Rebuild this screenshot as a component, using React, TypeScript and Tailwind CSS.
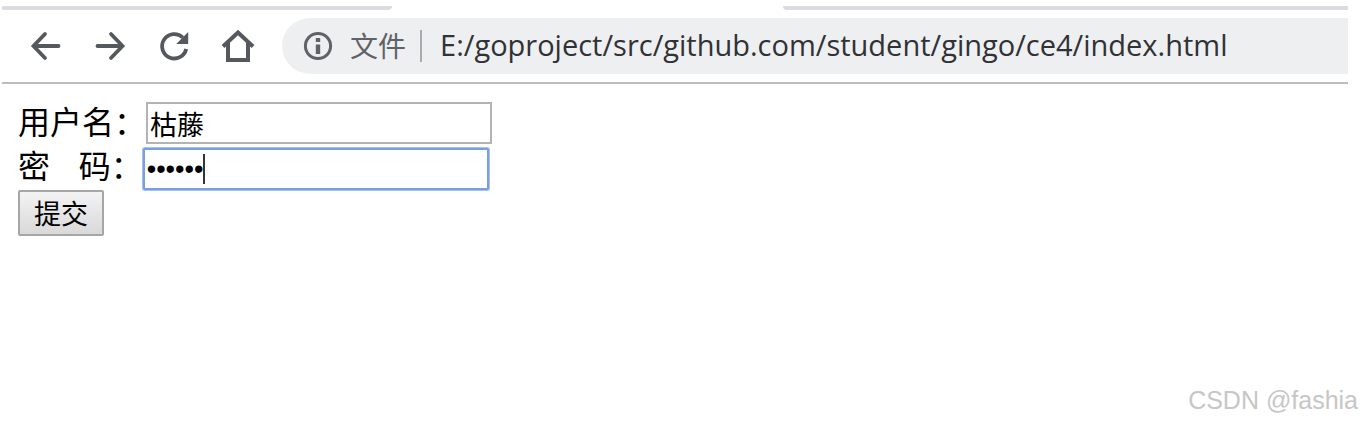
import React, { useState } from 'react';

function BackIcon() {
    return (
        <svg className="size-8" viewBox="0 0 32 32" fill="none" stroke="currentColor" strokeWidth="3.8" strokeLinecap="round">
            <path d="M28.500 16H4M15 4L3.500 16L15 28" />
        </svg>
    );
}

function ForwardIcon() {
    return (
        <svg className="size-8" viewBox="0 0 32 32" fill="none" stroke="currentColor" strokeWidth="3.8" strokeLinecap="round">
            <path d="M3.500 16H28M17 4L28.500 16L17 28" />
        </svg>
    );
}

function ReloadIcon() {
    return (
        <svg className="size-8" viewBox="0 0 32 32" fill="none" stroke="currentColor" strokeWidth="3.8">
            <path d="M28.200 19A12.200 12.200 0 1 1 24.800 7.500" />
            <path d="M30.200 2V14H18.200Z" fill="currentColor" stroke="none" />
        </svg>
    );
}

function HomeIcon() {
    return (
        <svg className="size-9" viewBox="0 0 36 36" fill="none" stroke="currentColor" strokeWidth="4">
            <path d="M3 18.500L18 4.500L33 18.500" />
            <path d="M8 15V32H28V15" />
        </svg>
    );
}

function InfoIcon() {
    return (
        <svg className="size-8 shrink-0" viewBox="0 0 32 32" fill="none" stroke="currentColor">
            <circle cx="16" cy="16" r="12.600" strokeWidth="3" />
            <path d="M16 14.500V24" strokeWidth="4.4" />
            <path d="M16 8V12" strokeWidth="4.4" />
        </svg>
    );
}

const navButtons = [
    { label: '后退', Icon: BackIcon },
    { label: '前进', Icon: ForwardIcon },
    { label: '重新加载', Icon: ReloadIcon },
    { label: '主页', Icon: HomeIcon },
];

function BrowserBar() {
    const [url, setUrl] = useState('E:/goproject/src/github.com/student/gingo/ce4/index.html');

    return (
        <header>
            <div className="flex h-1 justify-between">
                <div className="w-[29%] rounded-br-lg bg-[#dadce1]" />
                <div className="w-[42%] rounded-bl-lg bg-[#dadce1]" />
            </div>
            <div className="flex items-center border-b-2 border-[#bcbcbc] py-2 pl-3">
                <nav className="flex pr-3 text-[#55585d]">
                    {navButtons.map(({ label, Icon }) => (
                        <button key={label} type="button" aria-label={label} className="flex h-14 w-16 items-center justify-center">
                            <Icon />
                        </button>
                    ))}
                </nav>
                <div className="flex h-14 flex-1 items-center rounded-l-full bg-[#eeeff1] pl-5 text-[28px] text-[#5f6368]">
                    <InfoIcon />
                    <label htmlFor="url" className="ml-4 shrink-0 pb-0.5">文件</label>
                    <div className="mr-4 ml-3.5 h-8 w-0.5 shrink-0 bg-[#a9abae]" />
                    <input
                        id="url"
                        type="text"
                        value={url}
                        onChange={(e) => setUrl(e.target.value)}
                        className="min-w-0 flex-1 bg-transparent pb-0.5 pl-0.5 font-['Open_Sans','Noto_Sans_CJK_SC',sans-serif] text-[29px] text-[#303236] outline-none"
                    />
                </div>
            </div>
        </header>
    );
}

function LoginForm() {
    const [username, setUsername] = useState('枯藤');
    const [password, setPassword] = useState('123456');

    return (
        <form className="px-4 pt-[18px] text-[32px] text-black" onSubmit={(e) => e.preventDefault()}>
            <div className="flex h-11 items-start">
                <label htmlFor="username" className="leading-9">用户名：</label>
                <input
                    id="username"
                    type="text"
                    value={username}
                    onChange={(e) => setUsername(e.target.value)}
                    className="h-[42px] w-[346px] border-2 border-[#b3b3b3] bg-white px-0.5 text-[27px] outline-none"
                />
            </div>
            <div className="flex h-11 items-end">
                <label htmlFor="password" className="self-start leading-9">密&nbsp;&nbsp;&nbsp;&nbsp;码：</label>
                <div className="relative">
                    <input
                        id="password"
                        type="password"
                        value={password}
                        onChange={(e) => setPassword(e.target.value)}
                        className="block h-[42px] w-[346px] rounded-xs border-2 border-[#7b9fdd] bg-white px-0.5 font-['Liberation_Sans',sans-serif] text-[27px] ring-1 ring-[#a3c2f8] outline-none"
                    />
                    <span className="absolute top-1.5 left-[60px] h-[30px] w-0.5 bg-[#333]" />
                </div>
            </div>
            <button
                type="submit"
                className="flex h-[46px] w-[86px] items-center justify-center rounded-xs border-2 border-[#a6a6a6] bg-linear-to-b from-[#f3f3f3] to-[#d9d9d9] text-[27px]"
            >
                提交
            </button>
        </form>
    );
}

export default function App() {
    return (
        <div className="relative min-h-screen bg-white pt-1.5 pr-3.5 pl-0.5 font-['Noto_Sans_CJK_SC',sans-serif]">
            <BrowserBar />
            <LoginForm />
            <p className="absolute right-1 bottom-2 font-['Liberation_Sans',sans-serif] text-[25px] leading-7 text-[#c6c6c6]">
                CSDN @fashia
            </p>
        </div>
    );
}
